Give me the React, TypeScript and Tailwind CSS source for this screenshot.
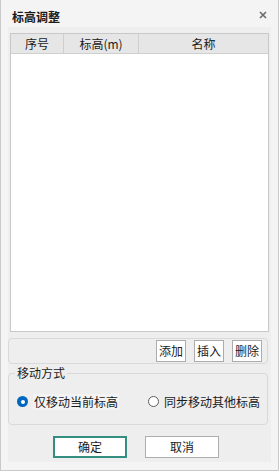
import { FunctionComponent } from "react";

const font = { fontFamily: '"Noto Sans CJK SC", "Noto Sans", sans-serif' };

const SmallButton: FunctionComponent<{ label: string }> = ({ label }) => (
    <button className="w-[30px] h-[22px] bg-white border border-[#acacac] text-[12px] leading-none text-[#1a1a1a] flex items-center justify-center">
        {label}
    </button>
);

const Radio: FunctionComponent<{ label: string; checked?: boolean }> = ({ label, checked }) => (
    <label className="flex items-center gap-[5px]">
        {checked ? (
            <span className="w-[11px] h-[11px] rounded-full bg-[#0067c0] flex items-center justify-center">
                <span className="w-[4px] h-[4px] rounded-full bg-white" />
            </span>
        ) : (
            <span className="w-[11px] h-[11px] rounded-full bg-white border border-[#5c5c5c]" />
        )}
        <span className={`text-[12px] leading-[16px] text-[#1a1a1a] ${checked ? "bg-[#f3f3f3] px-[1px]" : ""}`}>{label}</span>
    </label>
);

const App: FunctionComponent = () => {
    return (
        <div style={font} className="w-[279px] h-[471px] bg-[#f4f4f4] border-l border-r border-b border-[#c9c9c9] flex flex-col select-none">
            {/* title bar */}
            <div className="h-[27px] flex items-center justify-between pl-[11px] pr-[11px] pt-[6px]">
                <span className="text-[12px] font-bold text-[#1a1a1a] leading-none">标高调整</span>
                <svg width="8" height="8" viewBox="0 0 8 8" className="mb-[3px]">
                    <path d="M1 1 L7 7 M7 1 L1 7" stroke="#6b6b6b" strokeWidth="1.6" />
                </svg>
            </div>

            <div className="mx-[7px] flex-1 mb-[8px] bg-[#eeeeee] flex flex-col pt-[6px] pb-[4px]">
                {/* table */}
                <div className="ml-[2px] w-[259px] h-[299px] bg-white border border-[#c8c8c8] flex flex-col">
                    <div className="h-[20px] bg-[#e6e6e6] border-b border-[#cfcfcf] flex text-[12px] text-[#1a1a1a] leading-none">
                        <div className="w-[53px] border-r border-[#cfcfcf] flex items-center justify-center">序号</div>
                        <div className="w-[75px] border-r border-[#cfcfcf] flex items-center justify-center">标高(m)</div>
                        <div className="flex-1 flex items-center justify-center">名称</div>
                    </div>
                </div>

                {/* toolbar */}
                <div className="mt-[6px] w-[260px] h-[26px] border border-[#d9d9d9] rounded-[4px] flex items-center justify-end gap-[8px] pr-[5px]">
                    <SmallButton label="添加" />
                    <SmallButton label="插入" />
                    <SmallButton label="删除" />
                </div>

                {/* group box */}
                <div className="relative mt-[9px] w-[260px] h-[52px] border border-[#d9d9d9] rounded-[4px] flex items-center justify-between pl-[8px] pr-[7px] pt-[5px]">
                    <span className="absolute left-[6px] top-[-8px] px-[2px] bg-[#eeeeee] text-[12px] leading-[14px] text-[#1a1a1a]">移动方式</span>
                    <Radio label="仅移动当前标高" checked />
                    <Radio label="同步移动其他标高" />
                </div>

                {/* dialog buttons */}
                <div className="mt-[11px] flex gap-[18px] pl-[45px]">
                    <button className="w-[74px] h-[22px] bg-white border-2 border-[#358f80] text-[12px] leading-none text-[#1a1a1a]">确定</button>
                    <button className="w-[74px] h-[22px] bg-white border border-[#adadad] text-[12px] leading-none text-[#1a1a1a]">取消</button>
                </div>
            </div>
        </div>
    );
};

export default App;
